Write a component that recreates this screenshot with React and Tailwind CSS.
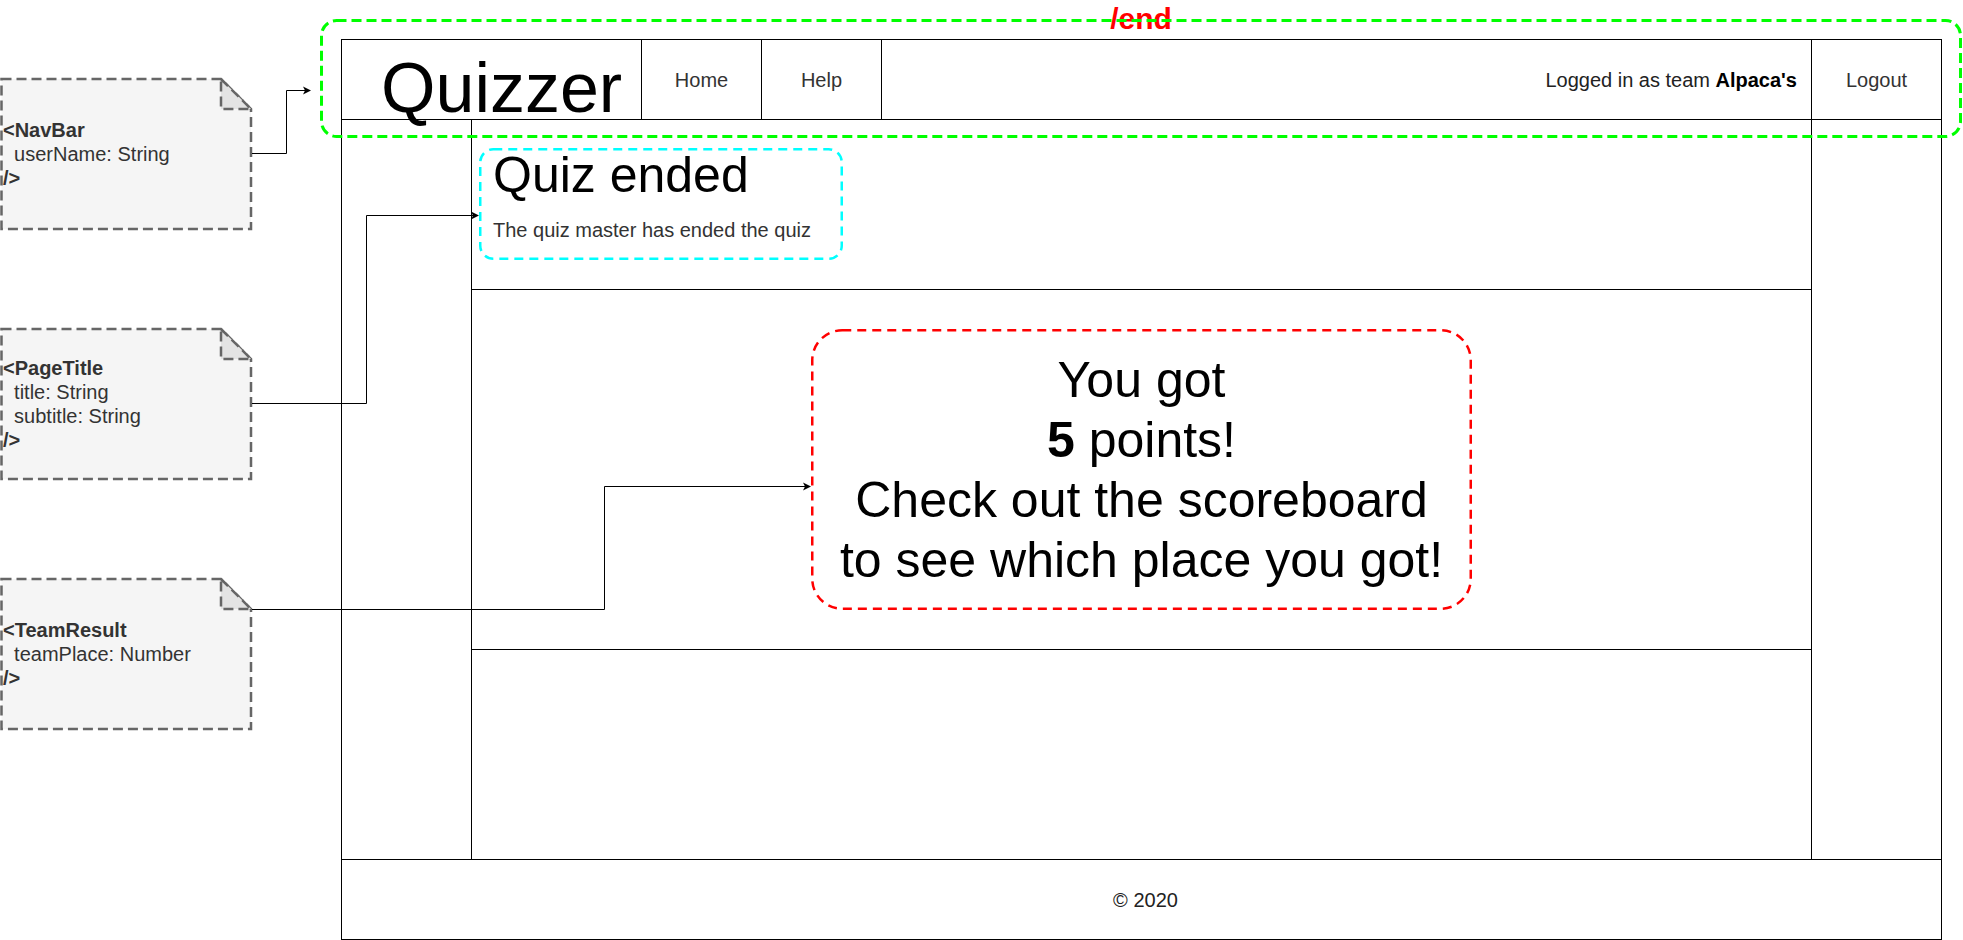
import React from 'react';

const notes = [
  { top: 79, lines: [['<NavBar', true], ['\u00a0\u00a0userName: String', false], ['/>', true]] },
  { top: 329, lines: [['<PageTitle', true], ['\u00a0\u00a0title: String', false], ['\u00a0\u00a0subtitle: String', false], ['/>', true]] },
  { top: 579, lines: [['<TeamResult', true], ['\u00a0\u00a0teamPlace: Number', false], ['/>', true]] },
];

function arrow(x, y) {
  return `M${x},${y} L${x - 8},${y - 4} L${x - 6},${y} L${x - 8},${y + 4} Z`;
}

function NoteShape({ top }) {
  const b = top + 150;
  return (
    <g>
      <path
        d={`M1.5,${top} H221 L251,${top + 30} V${b} H1.5 Z`}
        fill="#f5f5f5"
        stroke="#666666"
        strokeWidth="2.5"
        strokeDasharray="10 5"
      />
      <path
        d={`M221,${top} L251,${top + 30} H221 Z`}
        fill="#e3e3e3"
        stroke="#666666"
        strokeWidth="2.5"
        strokeDasharray="10 5"
      />
    </g>
  );
}

export default function App() {
  return (
    <div className="relative w-[1963px] h-[940px] overflow-hidden bg-white pl-[341px] pt-[39px] font-['Liberation_Sans',Arial,sans-serif]">
      {/* wireframe */}
      <div className="w-[1601px] h-[901px] border border-black flex flex-col">
        {/* navbar */}
        <nav className="h-[80px] shrink-0 flex border-b border-black">
          <div className="w-[300px] border-r border-black pl-[39px] pt-[13px] text-[70px] leading-none text-black whitespace-nowrap">
            Quizzer
          </div>
          <div className="w-[120px] border-r border-black flex items-center justify-center text-[20px] text-[#333]">
            Home
          </div>
          <div className="w-[120px] border-r border-black flex items-center justify-center text-[20px] text-[#333]">
            Help
          </div>
          <div className="flex-1 border-r border-black flex items-center justify-end pr-[14px] text-[20px] text-[#222] whitespace-pre">
            Logged in as team <b className="text-black">Alpaca's</b>
          </div>
          <div className="w-[129px] flex items-center justify-center text-[20px] text-[#333]">
            Logout
          </div>
        </nav>

        {/* body */}
        <div className="flex-1 flex">
          <div className="w-[130px] border-r border-black" />
          <div className="w-[1340px] border-r border-black flex flex-col">
            <div className="h-[170px] border-b border-black pl-[7px] pt-[28px]">
              <div className="relative w-[364px] h-[112px] pl-[14px] pt-[2px]">
                <svg className="absolute inset-0" width="364" height="112">
                  <rect x="1.25" y="1.25" width="361.5" height="109.5" rx="13" fill="none" stroke="#00ffff" strokeWidth="2.5" strokeDasharray="9 6" />
                </svg>
                <h1 className="relative text-[50px] leading-none text-black whitespace-nowrap">Quiz ended</h1>
                <p className="relative mt-[20px] text-[20px] leading-none text-[#333] whitespace-nowrap">
                  The quiz master has ended the quiz
                </p>
              </div>
            </div>
            <div className="h-[360px] border-b border-black flex items-center justify-center">
              <div className="relative w-[661px] h-[281px] flex flex-col items-center justify-center text-center text-[50px] leading-[60px] text-black">
                <svg className="absolute inset-0" width="661" height="281">
                  <rect x="1.25" y="1.25" width="658.5" height="278.5" rx="30" fill="none" stroke="#ff0000" strokeWidth="2.5" strokeDasharray="9 6" />
                </svg>
                <span className="relative">You got</span>
                <span className="relative"><b>5</b> points!</span>
                <span className="relative">Check out the scoreboard</span>
                <span className="relative">to see which place you got!</span>
              </div>
            </div>
            <div className="flex-1" />
          </div>
          <div className="flex-1" />
        </div>

        {/* footer */}
        <footer className="h-[80px] shrink-0 border-t border-black flex items-center justify-center pl-[8px] text-[20px] text-[#222]">
          © 2020
        </footer>
      </div>

      {/* route label */}
      <div className="absolute left-[1041px] top-[4px] w-[200px] text-center text-[30px] leading-none font-bold text-[#ff0000]">
        /end
      </div>

      {/* diagram annotations */}
      <svg className="absolute left-0 top-0 pointer-events-none" width="1963" height="940">
        <rect x="321.5" y="20.5" width="1639" height="116" rx="15" fill="none" stroke="#00ff00" strokeWidth="3" strokeDasharray="10 5" />
        {notes.map((n) => (
          <NoteShape key={n.top} top={n.top} />
        ))}
        <path d="M252,153.5 H286.5 V90.5 H305" fill="none" stroke="#000" strokeWidth="1" />
        <path d={arrow(311, 90.5)} fill="#000" />
        <path d="M252,403.5 H366.5 V215.5 H473" fill="none" stroke="#000" strokeWidth="1" />
        <path d={arrow(479, 215.5)} fill="#000" />
        <path d="M252,609.5 H604.5 V486.5 H805" fill="none" stroke="#000" strokeWidth="1" />
        <path d={arrow(811, 486.5)} fill="#000" />
      </svg>

      {/* note labels */}
      {notes.map((n) => (
        <div
          key={n.top}
          className="absolute left-[3px] h-[150px] flex flex-col justify-center text-[20px] leading-[24px] text-[#333] whitespace-pre"
          style={{ top: n.top }}
        >
          {n.lines.map(([t, bold], i) => (
            <span key={i} className={bold ? 'font-bold' : ''}>
              {t}
            </span>
          ))}
        </div>
      ))}
    </div>
  );
}
